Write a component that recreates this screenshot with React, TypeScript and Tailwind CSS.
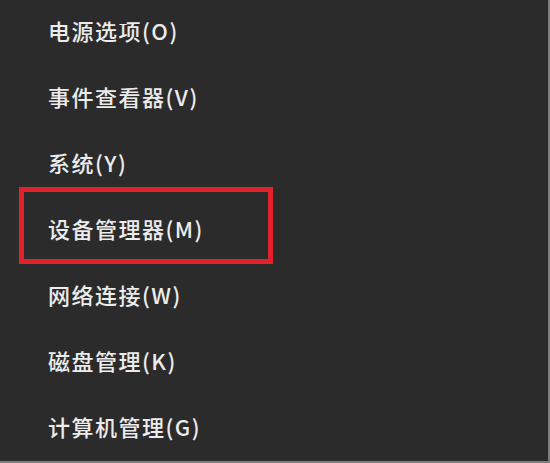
import React from 'react';

const items = [
  '电源选项(O)',
  '事件查看器(V)',
  '系统(Y)',
  '设备管理器(M)',
  '网络连接(W)',
  '磁盘管理(K)',
  '计算机管理(G)',
];

const App = () => {
  return (
    <div className="relative w-[550px] h-[463px] overflow-hidden bg-[#2b2b2b] border-r-2 border-b-2 border-[#7d7d7d]">
      <ul className="-mt-[3px] flex flex-col">
        {items.map((label) => (
          <li
            key={label}
            className="h-[66px] flex items-center pl-[48px] text-[22px] font-medium tracking-[1.5px] text-[#ececec]"
            style={{ fontFamily: '"Noto Sans CJK SC", "Noto Sans", sans-serif' }}
          >
            {label}
          </li>
        ))}
      </ul>
      {/* red highlight around 设备管理器 */}
      <div className="absolute left-[19px] top-[187px] w-[254px] h-[77px] border-[5px] border-[#e3212b]" />
    </div>
  );
};

export default App;
